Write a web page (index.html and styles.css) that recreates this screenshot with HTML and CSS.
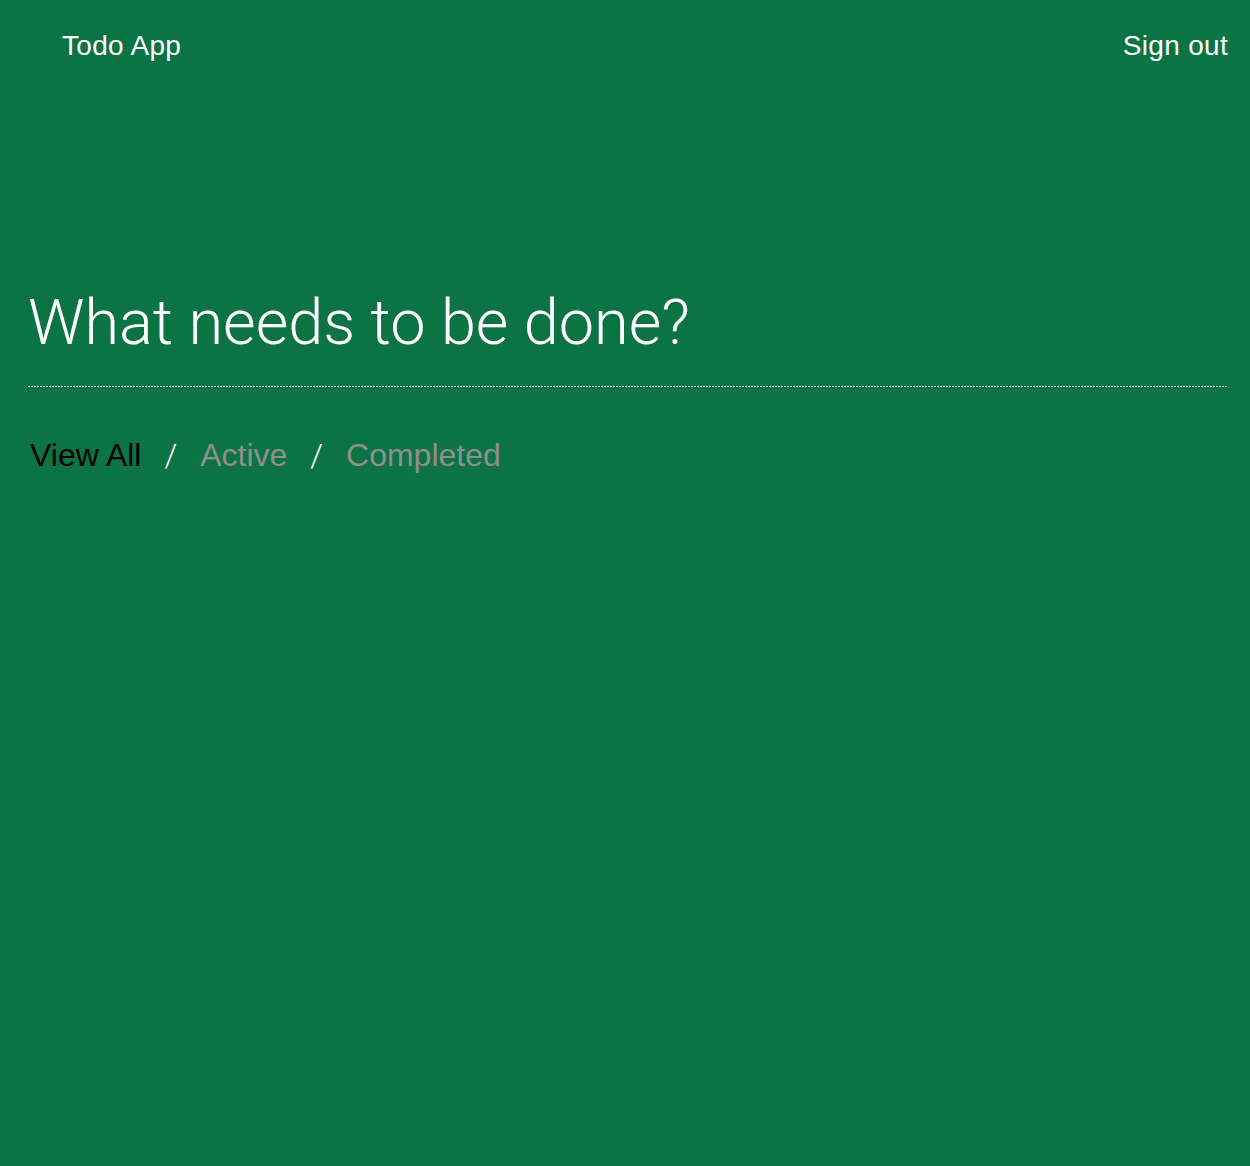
FILE: index.html
```html
<!DOCTYPE html>
<html lang="en">
<head>
<meta charset="utf-8">
<title>Todo App</title>
<link rel="stylesheet" href="styles.css">
</head>
<body>
<header class="topbar">
  <span class="brand">Todo App</span>
  <a class="signout" href="#">Sign out</a>
</header>
<main class="main">
  <input class="new-todo" type="text" placeholder="What needs to be done?">
  <nav class="filters">
    <a class="filter is-active" href="#">View All</a>
    <span class="sep">/</span>
    <a class="filter" href="#">Active</a>
    <span class="sep">/</span>
    <a class="filter" href="#">Completed</a>
  </nav>
</main>
</body>
</html>
```
FILE: styles.css
```css
html, body {
  margin: 0;
  padding: 0;
}
body {
  background: #0c7345;
  min-height: 100vh;
  font-family: "Liberation Sans", Arial, sans-serif;
  color: #fff;
}
.topbar {
  height: 92px;
  display: flex;
  align-items: center;
  justify-content: space-between;
  padding: 0 22px 0 62px;
}
.brand, .signout {
  font-size: 28px;
  letter-spacing: 0.3px;
  color: #fff;
  text-decoration: none;
}
.main {
  padding: 186px 22px 0 28px;
}
.new-todo {
  display: block;
  width: 100%;
  box-sizing: border-box;
  border: none;
  outline: none;
  margin: 0;
  padding: 6px 0 26px 0;
  height: 109px;
  background-color: transparent;
  background-image: linear-gradient(to right, #fff 0 2px, transparent 2px 3px);
  background-size: 3px 1px;
  background-repeat: repeat-x;
  background-position: left bottom;
  font-family: Roboto, "Liberation Sans", sans-serif;
  font-weight: 300;
  font-size: 63px;
  color: #fff;
}
.new-todo::placeholder {
  color: #fff;
  opacity: 1;
}
.filters {
  display: flex;
  align-items: baseline;
  gap: 23px;
  padding: 49px 0 0 2px;
  font-size: 32px;
}
.filter {
  color: #8f8f8f;
  text-decoration: none;
}
.filter.is-active {
  color: #000;
}
.sep {
  color: #fff;
  font-family: Roboto, "Liberation Sans", sans-serif;
  font-weight: 300;
}
```
